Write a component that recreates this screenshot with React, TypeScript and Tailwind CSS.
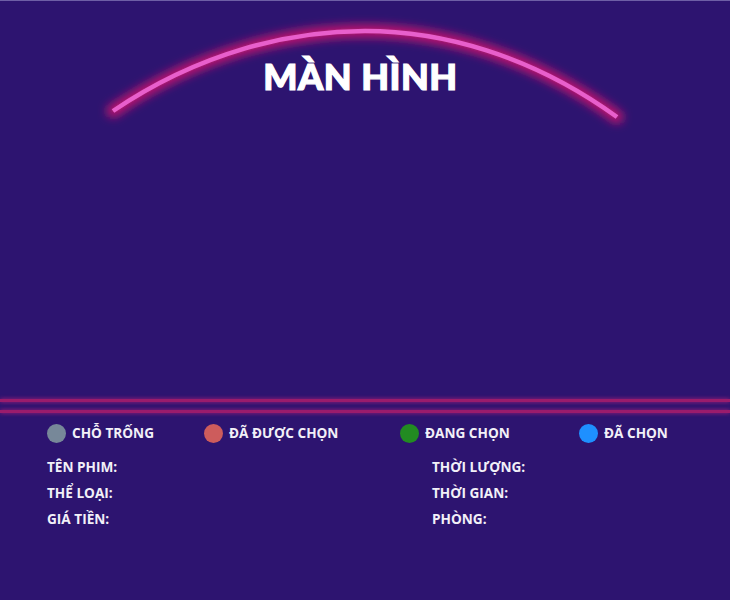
import React from 'react';

const legend = [
  { label: 'CHỖ TRỐNG', color: 'bg-[#778899]', width: 'w-[157px]' },
  { label: 'ĐÃ ĐƯỢC CHỌN', color: 'bg-[#cd5c5c]', width: 'w-[196px]' },
  { label: 'ĐANG CHỌN', color: 'bg-[#228b22]', width: 'w-[179px]' },
  { label: 'ĐÃ CHỌN', color: 'bg-[#1e90ff]', width: 'w-[110px]' },
];

const leftInfo = ['TÊN PHIM:', 'THỂ LOẠI:', 'GIÁ TIỀN:'];
const rightInfo = ['THỜI LƯỢNG:', 'THỜI GIAN:', 'PHÒNG:'];

export default function App() {
  return (
    <div className="w-full h-[600px] bg-[#2d1470] border-t border-[#6e5fa6] font-['Open_Sans',sans-serif] text-[#f2f0f8] overflow-hidden">
      {/* Screen */}
      <div className="relative h-[398px]">
        <svg
          className="absolute inset-0 pointer-events-none"
          width="730"
          height="398"
          viewBox="0 -1 730 398"
        >
          <defs>
            <filter id="glow" x="-20%" y="-50%" width="140%" height="200%">
              <feGaussianBlur stdDeviation="5" />
            </filter>
          </defs>
          <path
            d="M113 109 C 200 50 290 29 365 29 C 440 29 530 52 617 115"
            fill="none"
            stroke="#c01870"
            strokeWidth="13"
            strokeLinecap="round"
            filter="url(#glow)"
          />
          <path
            d="M113 109 C 200 50 290 29 365 29 C 440 29 530 52 617 115"
            fill="none"
            stroke="#e85fcc"
            strokeWidth="4.5"
          />
        </svg>
        <h1 className="relative pt-[55px] pr-[9px] text-center text-[36px] leading-[40px] font-black text-white tracking-[0.5px] font-['Lato',sans-serif] [-webkit-text-stroke:1.2px_white]">
          MÀN HÌNH
        </h1>
      </div>

      {/* Divider lines */}
      <div className="flex flex-col gap-[8px]">
        <div className="h-[3px] bg-[#9a1c6c] shadow-[0_0_4px_#b0207a]" />
        <div className="h-[3px] bg-[#9a1c6c] shadow-[0_0_4px_#b0207a]" />
      </div>

      {/* Legend */}
      <div className="flex pl-[47px] mt-[10px]">
        {legend.map((item) => (
          <div key={item.label} className={`flex items-center gap-[6px] ${item.width}`}>
            <span className={`w-[19px] h-[19px] rounded-full ${item.color}`} />
            <span className="text-[13.6px] font-bold leading-[20px]">{item.label}</span>
          </div>
        ))}
      </div>

      {/* Info */}
      <div className="grid grid-cols-[385px_1fr] pl-[47px] mt-[14px]">
        <div className="flex flex-col gap-[6px]">
          {leftInfo.map((t) => (
            <p key={t} className="text-[13.6px] font-bold leading-[20px]">{t}</p>
          ))}
        </div>
        <div className="flex flex-col gap-[6px]">
          {rightInfo.map((t) => (
            <p key={t} className="text-[13.6px] font-bold leading-[20px]">{t}</p>
          ))}
        </div>
      </div>
    </div>
  );
}
